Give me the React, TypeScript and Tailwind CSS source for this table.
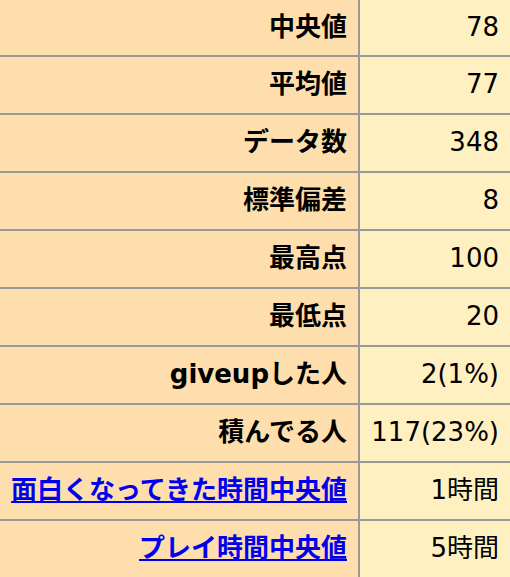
const rows: { label: string; value: string; link?: boolean }[] = [
  { label: "中央値", value: "78" },
  { label: "平均値", value: "77" },
  { label: "データ数", value: "348" },
  { label: "標準偏差", value: "8" },
  { label: "最高点", value: "100" },
  { label: "最低点", value: "20" },
  { label: "giveupした人", value: "2(1%)" },
  { label: "積んでる人", value: "117(23%)" },
  { label: "面白くなってきた時間中央値", value: "1時間", link: true },
  { label: "プレイ時間中央値", value: "5時間", link: true },
];

export default function App() {
  return (
    <div
      className="w-[510px] h-[577px] overflow-hidden bg-white text-[26px] text-black"
      style={{ fontFamily: '"DejaVu Sans", "Noto Sans CJK JP", sans-serif' }}
    >
      {rows.map((row, i) => (
        <div
          key={row.label}
          className={
            i === 0
              ? "flex h-[55px]"
              : "flex h-[58px] border-t-2 border-[#999999]"
          }
        >
          {/* Label cell */}
          <div className="w-[360px] shrink-0 flex items-center justify-end pr-[11px] pb-[1px] bg-[#fedead] border-r-2 border-[#999999] font-bold">
            {row.link ? (
              <a href="#" className="text-[#0000ee] underline">
                {row.label}
              </a>
            ) : (
              <span>{row.label}</span>
            )}
          </div>
          {/* Value cell */}
          <div className="flex-1 flex items-center justify-end pr-[11px] pb-[1px] bg-[#fff0c1]">
            {row.value}
          </div>
        </div>
      ))}
    </div>
  );
}
